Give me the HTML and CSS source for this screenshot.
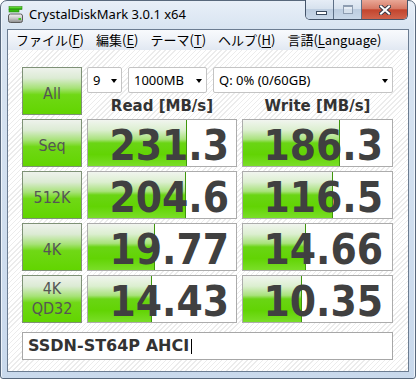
FILE: index.html
```html
<!DOCTYPE html>
<html lang="ja">
<head>
<meta charset="utf-8">
<title>CrystalDiskMark 3.0.1 x64</title>
<link rel="stylesheet" href="styles.css">
</head>
<body>
<div class="window">
  <div class="titlebar">
    <svg class="appicon" width="16" height="18" viewBox="0 0 16 18">
      <defs>
        <linearGradient id="gbar" x1="0" y1="0" x2="0" y2="1">
          <stop offset="0" stop-color="#9cf070"/>
          <stop offset="0.5" stop-color="#3cc414"/>
          <stop offset="1" stop-color="#1f9a08"/>
        </linearGradient>
        <linearGradient id="gdrive" x1="0" y1="0" x2="0" y2="1">
          <stop offset="0" stop-color="#f4f4f4"/>
          <stop offset="0.5" stop-color="#c8c8c8"/>
          <stop offset="1" stop-color="#8c8c8c"/>
        </linearGradient>
      </defs>
      <rect x="1" y="0.5" width="13" height="3" fill="url(#gbar)" stroke="#2a8a10" stroke-width="0.6"/>
      <rect x="1" y="3.5" width="10" height="2.5" fill="#34b812" stroke="#2a8a10" stroke-width="0.6"/>
      <rect x="0.5" y="8" width="14" height="8.5" rx="2" fill="url(#gdrive)" stroke="#5c5c5c" stroke-width="1"/>
      <rect x="10.5" y="12" width="2.5" height="2" fill="#38d018"/>
    </svg>
    <span class="title">CrystalDiskMark 3.0.1 x64</span>
    <div class="caption">
      <div class="cbtn cbtn-min"><span class="glyph-min"></span></div>
      <div class="cbtn cbtn-max"><span class="glyph-max"></span></div>
      <div class="cbtn cbtn-close">
        <svg width="12" height="10" viewBox="0 0 12 10">
          <path d="M2 1.5 L10 8.5 M10 1.5 L2 8.5" stroke="#3a3a46" stroke-width="4" stroke-linecap="square"/>
          <path d="M2 1.5 L10 8.5 M10 1.5 L2 8.5" stroke="#ffffff" stroke-width="2" stroke-linecap="square"/>
        </svg>
      </div>
    </div>
  </div>

  <div class="client">
    <div class="menubar">
      <span class="menu-item">ファイル(<u>F</u>)</span>
      <span class="menu-item">編集(<u>E</u>)</span>
      <span class="menu-item">テーマ(<u>T</u>)</span>
      <span class="menu-item">ヘルプ(<u>H</u>)</span>
      <span class="menu-item">言語(<u>L</u>anguage)</span>
    </div>

    <div class="content">
      <div class="bench">
        <div class="btn">All</div>
        <div class="controls">
          <div class="combos">
            <div class="combo combo-count"><span>9</span><span class="arrow"></span></div>
            <div class="combo combo-size"><span>1000MB</span><span class="arrow"></span></div>
            <div class="combo combo-drive"><span>Q: 0% (0/60GB)</span><span class="arrow"></span></div>
          </div>
          <div class="hdr">Read [MB/s]</div>
          <div class="hdr">Write [MB/s]</div>
        </div>

        <div class="btn">Seq</div>
        <div class="result"><div class="fill" style="width:99px"></div><span class="val">231.3</span></div>
        <div class="result result-w"><div class="fill" style="width:97px"></div><span class="val">186.3</span></div>

        <div class="btn">512K</div>
        <div class="result"><div class="fill" style="width:98px"></div><span class="val">204.6</span></div>
        <div class="result result-w"><div class="fill" style="width:90px"></div><span class="val">116.5</span></div>

        <div class="btn">4K</div>
        <div class="result"><div class="fill" style="width:67px"></div><span class="val">19.77</span></div>
        <div class="result result-w"><div class="fill" style="width:63px"></div><span class="val">14.66</span></div>

        <div class="btn btn-two">4K<br>QD32</div>
        <div class="result"><div class="fill" style="width:64px"></div><span class="val">14.43</span></div>
        <div class="result result-w"><div class="fill" style="width:59px"></div><span class="val">10.35</span></div>
      </div>

      <div class="drive">SSDN-ST64P AHCI<span class="caret"></span></div>
    </div>
  </div>
</div>
</body>
</html>
```

FILE: styles.css
```css
* { box-sizing: border-box; }

html, body {
  margin: 0;
  padding: 0;
}

body {
  width: 416px;
  height: 379px;
  overflow: hidden;
  background: #ffffff;
  font-family: "Noto Sans", sans-serif;
}

.window {
  width: 416px;
  height: 379px;
  display: flex;
  flex-direction: column;
  padding: 0 6px 6px 6px;
  border: 1px solid #58687c;
  border-radius: 7px 7px 3px 3px;
  background:
    linear-gradient(to bottom, #e8eff8 0px, #d8e4f1 28px, #c9d9ec 100%);
  box-shadow: inset 1px 0 0 #eef4fb, inset -1px 0 0 #eef4fb;
}

/* ---------- title bar ---------- */
.titlebar {
  height: 28px;
  display: flex;
  align-items: flex-start;
  flex-shrink: 0;
}

.appicon {
  margin: 5px 0 0 1px;
  flex-shrink: 0;
}

.title {
  margin: 4px 0 0 5px;
  font-family: "Noto Sans", sans-serif;
  font-size: 13px;
  line-height: 18px;
  color: #000;
  white-space: nowrap;
}

.caption {
  margin-left: auto;
  margin-top: -1px;
  margin-right: 1px;
  height: 20px;
  display: flex;
  border: 1px solid #44546a;
  border-top: none;
  border-radius: 0 0 5px 5px;
  overflow: hidden;
}

.cbtn {
  display: flex;
  align-items: center;
  justify-content: center;
}

.cbtn-min, .cbtn-max {
  width: 27px;
  background: linear-gradient(to bottom, #e6edf6 0%, #d7e2ee 45%, #bdcde0 50%, #c9d8e9 100%);
}

.cbtn-max {
  width: 28px;
  border-left: 1px solid #5d6f86;
}

.cbtn-close {
  width: 46px;
  border-left: 1px solid #5d6f86;
  background: linear-gradient(to bottom, #e9a796 0%, #d77a66 45%, #c3452e 52%, #d0634c 100%);
}

.glyph-min {
  width: 11px;
  height: 4px;
  margin: 6px 0 0 3px;
  background: #fff;
  border: 1px solid #3b4a5e;
}

.glyph-max {
  width: 10px;
  height: 9px;
  border: 1px solid #8e9db1;
  border-top-width: 2px;
  background: rgba(255, 255, 255, 0.35);
}

/* ---------- client ---------- */
.client {
  flex: 1;
  display: flex;
  flex-direction: column;
  border: 1px solid #6b7c91;
  background:
    repeating-linear-gradient(135deg, #ffffff 0px, #ffffff 2.6px, #ececec 2.6px, #ececec 3.6px);
  overflow: hidden;
}

.menubar {
  height: 20px;
  flex-shrink: 0;
  display: flex;
  align-items: center;
  gap: 12px;
  padding-left: 8px;
  background: linear-gradient(to bottom, #f8fafd 0%, #eef2f8 50%, #e1e8f2 100%);
  font-family: "Noto Sans CJK JP", "Noto Sans", sans-serif;
  font-size: 13px;
  line-height: 20px;
  color: #000;
}

.menu-item u {
  text-decoration-thickness: 1px;
  text-underline-offset: 2px;
}

.content {
  padding: 17px 0 0 14px;
}

.bench {
  display: grid;
  grid-template-columns: 60px 150px 151px;
  grid-auto-rows: 48px;
  column-gap: 5px;
  row-gap: 4px;
}

.btn {
  display: flex;
  align-items: center;
  justify-content: center;
  padding-top: 5px;
  border: 1px solid #7e9176;
  background: linear-gradient(to bottom, #eef2ec 0%, #dcebd4 22%, #a6e276 44%, #70d816 58%, #62d500 100%);
  font-family: "DejaVu Sans Condensed", "DejaVu Sans", sans-serif;
  font-size: 16px;
  line-height: 20px;
  color: #555;
  text-align: center;
}

.btn-two {
  padding-top: 0;
}

.controls {
  grid-column: 2 / 4;
  display: grid;
  grid-template-columns: 150px 151px;
  grid-template-rows: 26px 22px;
  column-gap: 5px;
}

.combos {
  grid-column: 1 / 3;
  display: flex;
  gap: 6px;
}

.combo {
  display: flex;
  align-items: center;
  justify-content: space-between;
  padding: 0 4px 0 5px;
  background: #fff;
  border: 1px solid #c4c4c4;
  border-radius: 2px;
  font-family: "Noto Sans", sans-serif;
  font-size: 13px;
  color: #000;
}

.combo-count { width: 35px; }
.combo-size { width: 79px; }
.combo-drive { width: 180px; }

.arrow {
  width: 0;
  height: 0;
  border-left: 3.5px solid transparent;
  border-right: 3.5px solid transparent;
  border-top: 4px solid #000;
  margin-top: 1px;
}

.hdr {
  padding-top: 3px;
  text-align: center;
  font-family: "DejaVu Sans", sans-serif;
  font-weight: bold;
  font-size: 15px;
  line-height: 20px;
  color: #333;
}

.result {
  position: relative;
  border: 1px solid #acacac;
  background: #fff;
  text-align: right;
  padding: 5px 7px 0 0;
  font-family: "DejaVu Sans Condensed", "DejaVu Sans", sans-serif;
  font-weight: bold;
  font-size: 42px;
  line-height: 42px;
  color: #404040;
}

.result-w {
  padding-right: 9px;
}

.fill {
  position: absolute;
  left: 0;
  top: 0;
  bottom: 0;
  border-right: 1px solid #3f960c;
  background: linear-gradient(to bottom, #f1f5ef 0%, #dcefd0 22%, #a9e27c 42%, #6ad514 50%, #62d404 75%, #7ade28 100%);
}

.val {
  position: relative;
}

.drive {
  margin-top: 9px;
  width: 371px;
  height: 28px;
  border: 1px solid #a7a7a7;
  background: #fff;
  padding-left: 5px;
  font-family: "DejaVu Sans", sans-serif;
  font-weight: bold;
  font-size: 16px;
  line-height: 26px;
  color: #333;
  white-space: nowrap;
}

.caret {
  display: inline-block;
  width: 1px;
  height: 15px;
  margin-left: 2px;
  vertical-align: -3px;
  background: #000;
}
```
